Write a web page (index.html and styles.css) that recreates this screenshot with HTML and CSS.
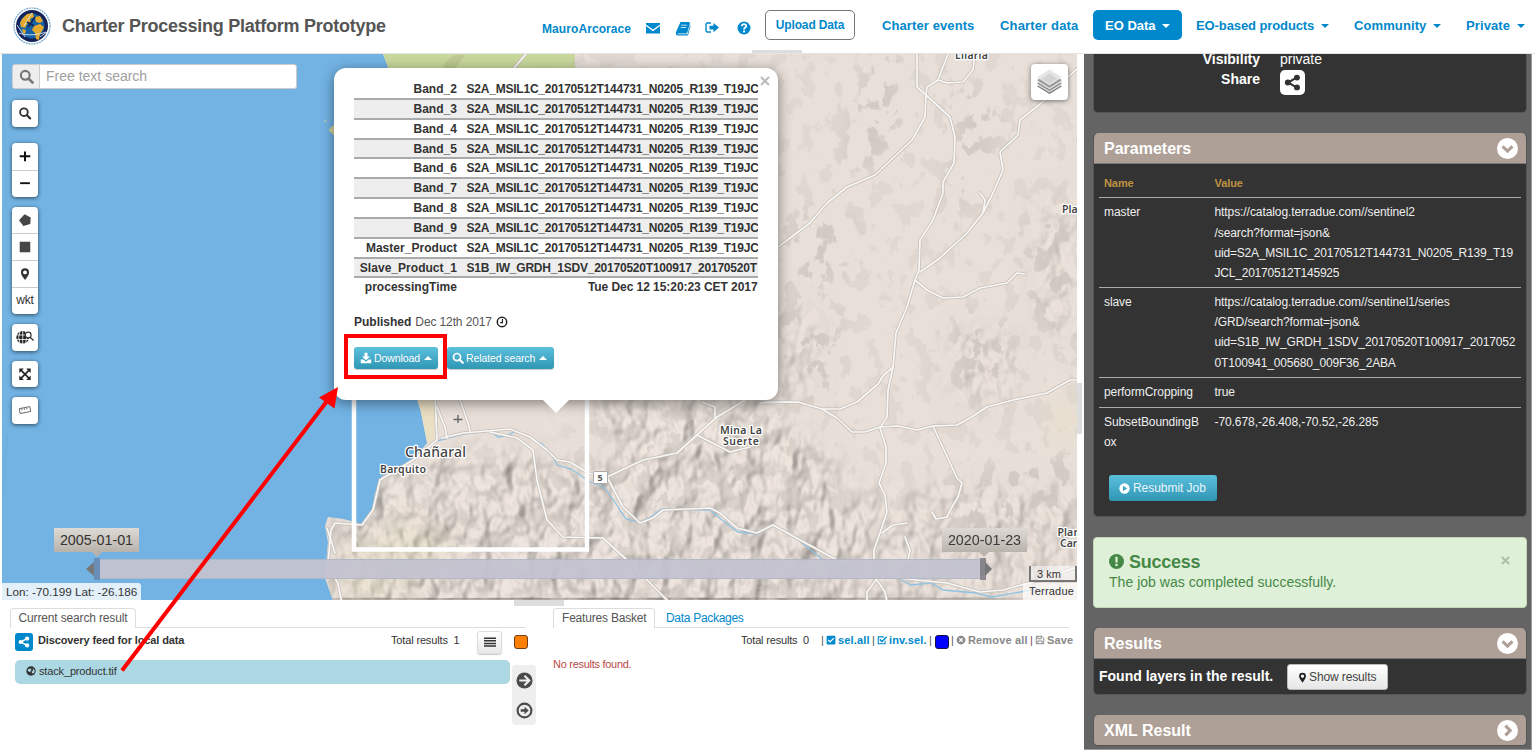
FILE: index.html
```html
<!DOCTYPE html>
<html lang="en">
<head>
<meta charset="utf-8">
<title>Charter Processing Platform Prototype</title>
<link rel="stylesheet" href="styles.css">
</head>
<body>
<svg class="sprite" aria-hidden="true">
  <symbol id="i-search" viewBox="0 0 16 16"><circle cx="6.7" cy="6.7" r="4.7" fill="none" stroke="currentColor" stroke-width="2.3"/><path d="M10.2 10.2L14.4 14.4" stroke="currentColor" stroke-width="2.8" stroke-linecap="round"/></symbol>
  <symbol id="i-share" viewBox="0 0 16 16"><path d="M12 3.2L4 8l8 4.8" fill="none" stroke="currentColor" stroke-width="2"/><circle cx="12.2" cy="3.4" r="2.8" fill="currentColor"/><circle cx="3.6" cy="8" r="2.8" fill="currentColor"/><circle cx="12.2" cy="12.6" r="2.8" fill="currentColor"/></symbol>
  <symbol id="i-pin" viewBox="0 0 16 16"><path fill="currentColor" fill-rule="evenodd" d="M8 1a5 5 0 0 1 5 5c0 2.200-1.400 4-2.500 6L8 15.500 5.500 12C4.400 10 3 8.200 3 6a5 5 0 0 1 5-5zm0 2.600a2.400 2.400 0 1 0 0 4.800 2.400 2.400 0 0 0 0-4.800z"/></symbol>
</svg>

<header class="header">
  <svg class="logo" viewBox="0 0 38 38">
    <circle cx="19" cy="19" r="18" fill="#fff" stroke="#6fa6cf" stroke-width="1.200" stroke-dasharray="2 .7"/>
    <circle cx="19" cy="19" r="16" fill="#14235a"/>
    <circle cx="19" cy="19" r="12.500" fill="#1461a5"/>
    <path d="M9 12l5-5 6-1 1 4-4 2 1 3-4 2-2 4-4-1-1-4z M22 10l5-1 3 5-3 2-4-1z M21 19l6-2 4 3-2 4-2 3-1 6-3-1-1-6-3-3z M9 22l4 1-1 4-2-1z" fill="#e5aa2c"/>
    <path d="M6 26c7 3 19 2 27-1M4 18l8 12M11 19l8-13M27 30l7-5" stroke="#d6e8f4" fill="none" stroke-width=".9"/>
    <path d="M15 20l7-10M14 15l7 4" stroke="#102450" stroke-width="1.500"/>
  </svg>
  <h1 class="title">Charter Processing Platform Prototype</h1>
  <div class="user">
    <span class="user-name">MauroArcorace</span>
    <svg viewBox="0 0 16 16"><path fill="currentColor" d="M1 3h14v1.400L8 9.600 1 4.400zM1 6l7 5.200L15 6v7.500H1z"/></svg>
    <svg viewBox="0 0 16 16"><path fill="currentColor" fill-rule="evenodd" d="M5.500 2H14l1 1-2.700 9.500-1 .9H3c-.6 0-.8.9 0 .9h9.500L15 5l.6.6-2.400 9.200-.9.700H3C1 15.500.400 13.700 1 12zM6.400 4.700l-.2.8h5.500l.2-.8zm-.6 2.200l-.2.800h5.500l.2-.8z"/></svg>
    <svg viewBox="0 0 16 16"><path fill="none" stroke="currentColor" stroke-width="1.400" d="M7 3H3.500Q2 3 2 4.500v6Q2 12 3.500 12H7"/><path fill="currentColor" d="M5.500 5.800h4V3L15 7.600l-5.500 4.600V9.400h-4z"/></svg>
    <svg viewBox="0 0 16 16"><circle cx="8" cy="8" r="6.500" fill="currentColor"/><path d="M5.800 6.200Q6 4.200 8 4.200T10.200 6C10.200 7.600 8 7.600 8 9.400M8 10.600v1.800" fill="none" stroke="#fff" stroke-width="1.800"/></svg>
  </div>
  <nav class="nav">
    <a class="upload">Upload Data</a>
    <a class="n-events">Charter events</a>
    <a class="n-data">Charter data</a>
    <a class="active">EO Data<i class="caret"></i></a>
    <a class="n-prod">EO-based products<i class="caret"></i></a>
    <a class="n-comm">Community<i class="caret"></i></a>
    <a class="n-priv">Private<i class="caret"></i></a>
  </nav>
  <i class="grip grip-top"></i>
</header>

<main class="main">
  <div class="left">
    <section class="map">
      <svg class="map-canvas" viewBox="2 54 1075 546">
        <defs>
          <filter id="relief" x="0" y="0" width="1" height="1" color-interpolation-filters="sRGB">
            <feTurbulence type="fractalNoise" baseFrequency=".045 .03" numOctaves="3" seed="8"/>
            <feColorMatrix values="0 0 0 0 0  0 0 0 0 0  0 0 0 0 0  1 0 0 0 0"/>
            <feGaussianBlur stdDeviation=".8"/>
            <feDiffuseLighting surfaceScale="11" lighting-color="#e8dfd8" diffuseConstant="1.060"><feDistantLight azimuth="220" elevation="68"/></feDiffuseLighting>
          </filter>
          <filter id="spots" x="0" y="0" width="1" height="1" color-interpolation-filters="sRGB">
            <feTurbulence type="fractalNoise" baseFrequency=".06 .045" numOctaves="4" seed="21"/>
            <feColorMatrix values="0 0 0 0 .81  0 0 0 0 .78  0 0 0 0 .75  16 0 0 0 -8.900"/>
          </filter>
          <filter id="soft" x="-.3" y="-.3" width="1.600" height="1.600"><feGaussianBlur stdDeviation="12"/></filter>
          <mask id="rugged"><g fill="#fff" filter="url(#soft)">
            <path d="M340 490L480 450l110 20 180-60 60 50 40 100-30 50H330z"/>
            <path d="M590 400h190l-30 70-110 20z"/>
            <path opacity=".7" d="M830 490h250v60l-80 60H830z"/>
            <path opacity=".6" d="M780 290l40 30-10 75-30 5zM960 330l60 10-10 70-60-15zM1040 200l40-10v160l-40-30z"/>
          </g></mask>
          <mask id="speckle"><g fill="#fff" filter="url(#soft)">
            <path opacity=".35" d="M560 40h540v580H560z"/>
            <path opacity=".5" d="M340 490L480 440l110 20v150H340z"/>
            <path opacity=".5" d="M590 400h190l50 60 40 140H590z"/>
            <path d="M870 60l30-6v100l-60 20zM960 80l40 30-20 90-30 10zM960 310l50 20v60l-60 5zM1030 210l50 10v130l-50-30zM940 480l140-30v60l-110 70z"/>
            <path d="M790 210l70 10-20 60-50 10zM780 300l60 10-10 90h-50z"/>
          </g></mask>
          <clipPath id="landclip"><path d="M383 54l7 18 25 320 6 20 6 31-4 5-11 14-30 14-7 17-2 18-11 13-19-5-15-2-3 9 3 16-3 36 8 23h744V54z"/></clipPath>
        </defs>
        <rect x="2" y="54" width="1075" height="546" fill="#72b3e4"/>
        <g clip-path="url(#landclip)">
          <rect x="320" y="54" width="760" height="546" fill="#e8dfd8"/>
          <path d="M383 54h192v20H383z" fill="#c8d89c"/>
          <g mask="url(#rugged)"><rect x="320" y="54" width="760" height="546" filter="url(#relief)" opacity=".5"/></g>
          <g mask="url(#speckle)"><rect x="320" y="54" width="760" height="546" filter="url(#spots)" opacity=".9"/></g>
          <path d="M455 55q-10 5-12 13h12q8-9 10-13z" fill="#b4c088" opacity=".6"/>
          <path d="M415 395h20l-1 45-7 3-5-22z" fill="#e9dfc3"/>
          <path d="M340 560l60-40 55 20-20 35-70 25h-20z" fill="#e4dfb4" opacity=".3" filter="url(#soft)"/>
          <path d="M1050 410l28-15v40l-25 5z" fill="#e9dfb8" opacity=".4" filter="url(#soft)"/>
        </g>
        <path d="M324 120l3 2M329 130l5-5v10z" fill="#cfd19a" stroke="#cfd19a"/>
        <path d="M2 70q5 100 4 140M8 435q-4 20-4 60M33 315q1 50-12 75" fill="none" stroke="#69a9d8" stroke-width=".8"/>
        <g id="rivers" fill="none" stroke="#8fc3e3" stroke-width="1.300">
          <path d="M437 441l26-7 27-3 8 6 8-1 10-5 26 13 9 9 6 12 14 4 19 13 14 5 12 17 10 15 13 3 10-4 13-9 48 1 12 10 16 12 20 2 16-9 27 17 22 18 32 12M897 578l14 7 20-2 12 7 33 3 16 4 45-8M1062 573l15-5"/>
        </g>
        <g id="roads" fill="none" stroke-linejoin="round" stroke-linecap="round">
          <g class="road-case"><use href="#roadlines"/></g>
          <g class="road-core"><g id="roadlines">
            <path d="M917 54v33l9 8 24 22 5 20-1 26-11 19v11l-10 27-13 20-1 30-4 10-8 27-11 26-3 34-5 23-1 27-7 11 6 19v16l-7 20 6 12 2 17-6 18-7 20v10l2 20-9 12v10M877 580l8 12 2 10"/>
            <path d="M948 54l-10 26-11 7-1 8-1 22-13 23-37 35-28 12-20 16-17 20-32 24M975 54l-2 16-10 12-16 1-9-3"/>
            <path d="M1078 68l-10 9-23 23-25 20-2 15-18 17 3 18-10 23-10 20-16 20-27 25-20 14M980 193l5 7-2 13M915 280l12 10 16 8 20-1 17-9 27-5 10-10 8 1"/>
            <path d="M760 403l38-1 24 7h18l17-7 21-18 5-8 10-9M822 409l15 9 15 14h13l15-5 18-1 19 4 16-4 24-1 13-7 17-11 26-7 34-7 23-13h7"/>
            <path d="M933 426l24 52 5 5-4 14-6 10-5 10-11 2-4-7M882 533l11-8 14-2M905 537l5 13-2 10"/>
            <path d="M435 395l2 45-24 20-33 20-7 30-11 15-27-2-4 7-2 22-1 10 10 22 4 20M442 438l21-5 47-4 20 8 17 13 10 10 13 2 18 11 19 4 16 30 17 16 13-5 10-8 47-2 10 5 17 15 20 5 16-8 27 15 37 20 60 18 50 5 33 9 23-2 37-10 37-13"/>
            <path d="M607 477l36-17 34-7 20-18 20-18 30-18M697 435l33 17 20-5M702 402l13 5v10M490 432l27 6 16 12 4 30 10 40 16 17 40 1 24 22 18 18 22 22M437 407l8 20 2 11M460 400l8 23 2 8M765 402h25M514 68l12-14M327 528l8 25"/>
          </g></g>
        </g>
        <g id="labels" class="map-labels">
          <text class="town" x="405" y="457" textLength="61">Chañaral</text>
          <text x="380" y="473" textLength="46">Barquito</text>
          <text x="720" y="434" textLength="42">Mina La</text>
          <text x="723" y="445" textLength="36">Suerte</text>
          <text x="955" y="58.500" textLength="33">Lliaria</text>
          <text x="1062" y="213">Pla</text>
          <text x="1057.500" y="535.500">Pla</text><text x="1073.500" y="535.500">r</text>
          <text x="1060" y="547">Car</text>
        </g>
        <path d="M453.500 419.500h9M458 415v8" stroke="#666" stroke-width="1.400"/>
        <rect x="593.500" y="471.500" width="14" height="12" rx="1" fill="#fff" stroke="#aaa"/>
        <text class="shield" x="597.500" y="481">5</text>
        <rect x="354" y="300" width="233" height="249.500" fill="none" stroke="#fff" stroke-width="4.500"/>
      </svg>

      <div class="search"><span><svg viewBox="0 0 16 16"><use href="#i-search"/></svg></span><b>Free text search</b></div>

      <div class="tools">
        <div class="tool"><svg viewBox="0 0 16 16"><use href="#i-search"/></svg></div>
        <div class="tool gap-a"><svg viewBox="0 0 16 16"><path d="M8 2v12M1.500 8h13" stroke="#111" stroke-width="2.500"/></svg><svg viewBox="0 0 16 16"><path d="M2 7h12" stroke="#111" stroke-width="2.300"/></svg></div>
        <div class="tool gap-b">
          <svg viewBox="0 0 16 16"><path d="M7.500.500l7.500 4-.5 8L6 15 .500 8z" fill="#464646"/></svg>
          <svg viewBox="0 0 16 16"><path d="M1.500 1.500h13v13h-13z" fill="#464646"/></svg>
          <svg viewBox="0 0 16 16"><use href="#i-pin"/></svg>
          <em>wkt</em>
        </div>
        <div class="tool gap-b"><svg class="wide" viewBox="0 0 20 16"><circle cx="7.500" cy="8" r="7" fill="#222"/><path d="M0 5.500h15M0 10.500h15M7.500 0v16M4.500 1q-3 7 0 14M10.500 1q3 7 0 14" stroke="#fff" fill="none" stroke-width=".9"/><circle cx="13.500" cy="5.500" r="3.200" fill="#fff" stroke="#333" stroke-width="1.300"/><path d="M15.500 8l4 3.500" stroke="#333" stroke-width="1.500"/></svg></div>
        <div class="tool gap-b"><svg viewBox="0 0 16 16"><path d="M3 3l10 10M13 3L3 13" stroke="#222" stroke-width="2"/><path d="M1 1h5.500L1 6.500zM15 1H9.500L15 6.500zM1 15h5.500L1 9.500zM15 15H9.500L15 9.500z" fill="#222"/></svg></div>
        <div class="tool gap-b"><svg viewBox="0 0 16 16"><path d="M1 6l13-2.500 1 6L2 12zM4 6l.4 2M7 5.400l.4 2M10 4.900l.4 2" fill="none" stroke="#555" stroke-width="1.100"/></svg></div>
      </div>

      <div class="layers"><svg viewBox="0 0 28 28"><path d="M1 18.500l13 8 13-8-3-1.500-10 6-10-6z" fill="#777"/><path d="M1 17l13 8 13-8-3-1.500-10 6-10-6z" fill="#ddd"/><path d="M1 15.300l13 8 13-8-3-1.500-10 6-10-6z" fill="#8a8a8a"/><path d="M1 13.800l13 8 13-8-3-1.500-10 6-10-6z" fill="#ddd"/><path d="M1 12l13 8 13-8-3-1.500-10 6-10-6z" fill="#999"/><path d="M14 1l13 8-13 8.500L1 9z" fill="#e6e6e6"/><path d="M14 5l8 5.500-8 5.500-8-5.500z" fill="#d4d4d4"/></svg></div>

      <div class="slider">
        <i class="handle h-left"></i><i class="bar"></i><i class="handle h-right"></i>
        <span class="date d-left">2005-01-01</span><span class="date d-right">2020-01-23</span>
      </div>
      <div class="coords">Lon: -70.199 Lat: -26.186</div>
      <div class="scale">3 km</div>
      <div class="credit">Terradue</div>

      <div class="popup">
        <svg class="close" viewBox="0 0 10 10"><path d="M1 1l8 8M9 1L1 9" stroke="#bbb" stroke-width="2"/></svg>
        <div class="bands">
          <div class="band"><span>Band_2</span><span>S2A_MSIL1C_20170512T144731_N0205_R139_T19JC</span></div>
          <div class="band"><span>Band_3</span><span>S2A_MSIL1C_20170512T144731_N0205_R139_T19JC</span></div>
          <div class="band"><span>Band_4</span><span>S2A_MSIL1C_20170512T144731_N0205_R139_T19JC</span></div>
          <div class="band"><span>Band_5</span><span>S2A_MSIL1C_20170512T144731_N0205_R139_T19JC</span></div>
          <div class="band"><span>Band_6</span><span>S2A_MSIL1C_20170512T144731_N0205_R139_T19JC</span></div>
          <div class="band"><span>Band_7</span><span>S2A_MSIL1C_20170512T144731_N0205_R139_T19JC</span></div>
          <div class="band"><span>Band_8</span><span>S2A_MSIL1C_20170512T144731_N0205_R139_T19JC</span></div>
          <div class="band"><span>Band_9</span><span>S2A_MSIL1C_20170512T144731_N0205_R139_T19JC</span></div>
          <div class="band"><span>Master_Product</span><span>S2A_MSIL1C_20170512T144731_N0205_R139_T19JC</span></div>
          <div class="band"><span>Slave_Product_1</span><span>S1B_IW_GRDH_1SDV_20170520T100917_20170520T</span></div>
          <div class="band last"><span>processingTime</span><span>Tue Dec 12 15:20:23 CET 2017</span></div>
        </div>
        <div class="published"><b>Published</b> Dec 12th 2017 <svg viewBox="0 0 16 16"><circle cx="8" cy="8" r="6.300" fill="none" stroke="currentColor" stroke-width="2"/><path d="M8.600 4v4.800H5.500" fill="none" stroke="currentColor" stroke-width="1.500"/></svg></div>
        <div class="actions">
          <span class="btn-info"><svg viewBox="0 0 16 16"><path fill="#fff" d="M6 1h4v5h3.500L8 11 2.500 6H6zM1 10h3.500L8 13l3.500-3H15v5H1z"/></svg><u>Download</u><i class="caret up"></i></span>
          <span class="btn-info rel"><svg viewBox="0 0 16 16"><use href="#i-search"/></svg><u>Related search</u><i class="caret up"></i></span>
        </div>
      </div>
    </section>

    <section class="bottom">
      <i class="grip grip-mid"></i>
      <div class="results">
        <div class="tabs"><span class="tab w-cur">Current search result</span></div>
        <div class="toolbar">
          <span class="share"><svg viewBox="0 0 16 16"><use href="#i-share"/></svg></span>
          <b class="feed">Discovery feed for local data</b>
          <span class="total">Total results&nbsp; 1</span>
          <span class="list-btn"><svg viewBox="0 0 12 10"><path d="M0 1.200h12M0 3.800h12M0 6.400h12M0 9h12" stroke="#333" stroke-width="1.500"/></svg></span>
          <i class="swatch orange"></i>
        </div>
        <div class="rows">
          <div class="item"><svg viewBox="0 0 16 16"><circle cx="8" cy="8" r="7.500" fill="#333"/><path d="M3 5l4-1 2 2-2 2v2L5 9 3 8zM11 4l3 3-1 4-3 1-1-3 2-1z" fill="#acd8e4"/></svg><span>stack_product.tif</span></div>
          <div class="move">
            <svg viewBox="0 0 18 18"><circle cx="9" cy="9" r="8.500" fill="#4a4a4a"/><path d="M3.500 9h9M9 4l5 5-5 5" fill="none" stroke="#eee" stroke-width="2.300"/></svg>
            <svg viewBox="0 0 18 18"><circle cx="9" cy="9" r="7.300" fill="none" stroke="#4a4a4a" stroke-width="2.200"/><path d="M5 7.600h4V5l4.500 4L9 13v-2.600H5z" fill="#4a4a4a"/></svg>
          </div>
        </div>
      </div>
      <div class="basket">
        <div class="tabs"><span class="tab w-bas">Features Basket</span><span class="tab-link">Data Packages</span></div>
        <div class="basket-tools">
          <span class="t-total">Total results&nbsp; 0</span>
          <span class="bt blue g-sel"><s>|</s><svg viewBox="0 0 16 16"><rect x="1" y="1" width="14" height="14" rx="2" fill="currentColor"/><path d="M3.500 8l3 3 6-6" fill="none" stroke="#fff" stroke-width="2.200"/></svg><b>sel.all</b></span>
          <span class="bt blue g-inv"><s>|</s><svg viewBox="0 0 16 16"><path d="M13 9v5H2V3h9" fill="none" stroke="currentColor" stroke-width="1.700"/><path d="M4.500 7l3.500 3.500L15.500 3" fill="none" stroke="currentColor" stroke-width="2.400"/></svg><b>inv.sel.</b></span>
          <span class="bt g-blue"><s>|</s><i class="swatch bluebox"></i></span>
          <span class="bt grey g-rem"><s>|</s><svg viewBox="0 0 16 16"><circle cx="8" cy="8" r="7" fill="currentColor"/><path d="M5.300 5.300l5.400 5.400M10.700 5.300l-5.400 5.400" stroke="#fff" stroke-width="2"/></svg><b>Remove all</b></span>
          <span class="bt grey g-save"><s>|</s><svg viewBox="0 0 16 16"><path d="M2 2h9l3 3v9H2zM4.500 2v4H10V2M4.500 14V9.500h7V14" fill="none" stroke="currentColor" stroke-width="1.500"/></svg><b>Save</b></span>
        </div>
        <p class="none">No results found.</p>
      </div>
    </section>
  </div>

  <i class="grip grip-side"></i>

  <aside class="panel">
    <div class="card info">
      <dl><dt>Visibility</dt><dd>private</dd><dt>Share</dt><dd><span class="share-lg"><svg viewBox="0 0 16 16"><use href="#i-share"/></svg></span></dd></dl>
    </div>
    <div class="card">
      <h2>Parameters<svg viewBox="0 0 20 20"><circle cx="10" cy="10" r="10" fill="#fff"/><path d="M5.300 8l4.700 4.500L14.700 8" fill="none" stroke="#ae9f97" stroke-width="3"/></svg></h2>
      <div class="params">
        <div class="prow phead"><span>Name</span><span>Value</span></div>
        <div class="prow"><span>master</span><span>https://catalog.terradue.com//sentinel2<br>/search?format=json&amp;<br><u class="uid">uid=S2A_MSIL1C_20170512T144731_N0205_R139_T19<br>JCL_20170512T145925</u></span></div>
        <div class="prow"><span>slave</span><span>https://catalog.terradue.com//sentinel1/series<br>/GRD/search?format=json&amp;<br><u class="uid uid-slave">uid=S1B_IW_GRDH_1SDV_20170520T100917_2017052<br>0T100941_005680_009F36_2ABA</u></span></div>
        <div class="prow"><span>performCropping</span><span>true</span></div>
        <div class="prow"><span>SubsetBoundingB<br>ox</span><span>-70.678,-26.408,-70.52,-26.285</span></div>
        <span class="resubmit"><svg viewBox="0 0 16 16"><circle cx="8" cy="8" r="7.500" fill="#fff"/><path d="M5.800 4l6 4-6 4z" fill="#3fa5c4"/></svg>Resubmit Job</span>
      </div>
    </div>
    <div class="alert">
      <svg class="close-alert" viewBox="0 0 10 10"><path d="M1 1l8 8M9 1L1 9" stroke="#aec0a9" stroke-width="2.400"/></svg>
      <h3><svg viewBox="0 0 16 16"><circle cx="8" cy="8" r="8" fill="currentColor"/><path d="M8 3v6M8 10.500v2.300" stroke="#dff0d8" stroke-width="2.400"/></svg>Success</h3>
      <p>The job was completed successfully.</p>
    </div>
    <div class="card">
      <h2>Results<svg viewBox="0 0 20 20"><circle cx="10" cy="10" r="10" fill="#fff"/><path d="M5.300 8l4.700 4.500L14.700 8" fill="none" stroke="#ae9f97" stroke-width="3"/></svg></h2>
      <div class="found"><b>Found layers in the result.</b><span class="show"><svg viewBox="0 0 16 16"><use href="#i-pin"/></svg>Show results</span></div>
    </div>
    <div class="card">
      <h2 class="closed">XML Result<svg viewBox="0 0 20 20"><circle cx="10" cy="10" r="10" fill="#fff"/><path d="M8 5.300l4.500 4.700L8 14.700" fill="none" stroke="#ae9f97" stroke-width="3"/></svg></h2>
    </div>
  </aside>
</main>

<svg class="annotation" viewBox="0 0 1535 754">
  <rect x="346" y="336" width="99" height="41" fill="none" stroke="red" stroke-width="4"/>
  <path d="M122 670.500L329 398.500" stroke="red" stroke-width="4"/>
  <path d="M338 387l-19 10.500 15.500 11z" fill="red"/>
</svg>
</body>
</html>
```
FILE: styles.css
```css
* { box-sizing: border-box; }
body { margin: 0; width: 1535px; height: 754px; overflow: hidden; background: #fff; color: #333; font: 12px "Liberation Sans", Arial, sans-serif; position: relative; white-space: nowrap; }
i, em, u, s { font-style: normal; text-decoration: none; }
svg { display: block; flex: none; }
.sprite { position: absolute; width: 0; height: 0; }

.header { height: 54px; display: flex; position: relative; padding-left: 13px; border-bottom: 1px solid #e4e4e4; }
.logo { width: 38px; height: 38px; margin-top: 7px; }
.title { margin: 0 0 0 11px; width: 480px; font-size: 18px; line-height: 52px; color: #555; letter-spacing: -.25px; }
.user { display: flex; align-items: center; height: 20px; margin-top: 18px; width: 223px; color: #0088cc; }
.user-name { width: 105px; font-weight: bold; font-size: 12px; letter-spacing: .08px; padding-top: 1px; }
.user svg { width: 16px; height: 16px; margin-right: 13.500px; }
.user svg:last-child { margin-left: 2px; }
.nav { display: flex; padding-top: 10px; color: #0088cc; font-weight: bold; font-size: 13px; }
.nav a { height: 30px; line-height: 31px; letter-spacing: .1px; }
.nav .upload { width: 90px; border: 1px solid #777; border-radius: 5px; text-align: center; line-height: 29px; font-size: 12px; letter-spacing: -.15px; }
.nav .n-events { width: 118px; margin-left: 27px; }
.nav .n-data { width: 93px; letter-spacing: .15px; }
.nav .active { width: 89px; background: #0088cc; color: #fff; border-radius: 5px; padding-left: 12px; margin-right: 14px; letter-spacing: 0; }
.nav .n-prod { width: 158px; letter-spacing: -.1px; }
.nav .n-comm { width: 112px; }
.caret { display: inline-block; border: 4px solid transparent; border-top-color: currentColor; border-bottom: 0; margin-left: 6.500px; vertical-align: 2px; }
.caret.up { border-bottom: 4px solid #fff; border-top: 0; margin-left: 4px; }
.grip { position: absolute; background: #ddd; display: block; }
.grip-top { left: 752px; top: 50px; width: 50px; height: 3px; }
.grip-mid { left: 512px; top: 0; width: 50px; height: 6px; }
.grip-side { left: 1077px; top: 329px; width: 5px; height: 51px; }

.main { display: flex; position: relative; height: 696px; padding-left: 2px; }
.left { width: 1075px; margin-right: 7px; }
.map { position: relative; height: 546px; overflow: hidden; }
.map-canvas { width: 1075px; height: 546px; }
.road-case { stroke: #c5bfb9; stroke-width: 3.200; }
.road-core { stroke: #faf8f6; stroke-width: 1.700; }
.map-labels { font: 600 10.500px "Noto Sans", sans-serif; fill: #444; stroke: #fff; stroke-width: 2.500px; paint-order: stroke; stroke-linejoin: round; }
.map-labels .town { font-size: 14px; font-weight: 500; }
.shield { font: bold 9px "Noto Sans", sans-serif; fill: #555; }

.search { position: absolute; left: 10px; top: 10px; width: 285px; height: 25px; display: flex; background: #fff; border: 1px solid #ccc; border-radius: 3px; overflow: hidden; }
.search span { width: 27px; background: #eee; border-right: 1px solid #ccc; padding: 4px 6px; color: #777; }
.search svg { width: 15px; height: 15px; }
.search b { font-weight: normal; font-size: 14px; line-height: 22px; padding-left: 6px; color: #a0a0a0; }
.tools { position: absolute; left: 10px; top: 46px; width: 26px; }
.tool { background: #fff; border-radius: 4px; box-shadow: 0 1px 4px rgba(0,0,0,.6); display: flex; flex-direction: column; color: #333; }
.tool svg { width: 26px; height: 26.500px; padding: 6.500px; }
.tool svg + svg, .tool em { border-top: 1px solid #ccc; }
.tool svg + svg { height: 27px; }
.tool em { text-align: center; line-height: 25px; height: 27px; font-size: 12px; letter-spacing: -.1px; }
.tool .wide { padding: 6px 3px; }
.gap-a { margin-top: 16.500px; }
.gap-b { margin-top: 10px; }
.layers { position: absolute; left: 1029px; top: 10px; width: 37px; height: 36px; background: #fff; border-radius: 4px; box-shadow: 0 1px 5px rgba(0,0,0,.5); padding: 4px 5px; }
.layers svg { width: 27px; height: 28px; }

.slider { position: absolute; left: 85px; top: 504px; display: flex; }
.bar { width: 880px; height: 20px; margin-top: 1px; background: rgba(194,194,207,.94); border: solid rgba(160,165,190,.4); border-width: 1px 0; }
.handle { width: 6px; height: 22px; margin-left: 7px; background: rgba(100,125,160,.65); position: relative; }
.h-right { margin-left: 0; background: rgba(110,110,120,.75); }
.handle::after { content: ""; position: absolute; top: 4px; left: -8px; border: 7px solid transparent; border-right: 8px solid #777; border-left: 0; }
.h-right::after { left: 5px; border-left: 7px solid #777; border-right: 0; }
.date { position: absolute; top: -30px; width: 85px; height: 24px; line-height: 25px; text-align: center; font-size: 14.300px; background: linear-gradient(#dedad5, #b8b2ab); }
.date::after { content: ""; position: absolute; left: 38px; top: 24px; border: 5px solid transparent; border-top-color: #b8b2ab; }
.d-left { left: -33px; }
.d-right { left: 855px; opacity: .95; }
.d-right::after { left: 37px; }
.coords { position: absolute; left: 0; bottom: 0; width: 139px; height: 17px; line-height: 17px; padding-left: 4px; font-size: 11.700px; background: rgba(255,255,255,.8); border-radius: 0 3px 0 0; }
.scale { position: absolute; right: 0; bottom: 18px; width: 48px; height: 16px; border: 2px solid #777; border-top: 0; background: rgba(255,255,255,.5); line-height: 16px; font-size: 11px; padding-left: 6px; }
.credit { position: absolute; right: 0; bottom: 0; width: 54px; height: 17px; line-height: 17px; font-size: 11px; padding-left: 6px; background: rgba(255,255,255,.7); letter-spacing: .2px; }

.popup { position: absolute; left: 332px; top: 14px; width: 444px; height: 332px; padding: 12px 20px; background: #fff; border-radius: 12px; box-shadow: 0 3px 14px rgba(0,0,0,.45); }
.popup::after { content: ""; position: absolute; left: 208px; top: 331px; border: 14px solid transparent; border-top-color: #fff; border-bottom: 0; }
.close { position: absolute; right: 8px; top: 8px; width: 10px; height: 10px; }
.bands { width: 404px; overflow: hidden; }
.band { display: grid; grid-template-columns: 103px 300px; column-gap: 9.500px; height: 19.850px; line-height: 19px; border-bottom: 2px solid #aaa; font-weight: bold; letter-spacing: .03px; }
.band:nth-child(even) { background: #eee; }
.band span:first-child { text-align: right; }
.band span:last-child { letter-spacing: -.22px; }
.band.last { border: 0; grid-template-columns: 103px 291px; }
.band.last span:last-child { text-align: right; letter-spacing: -.06px; }
.published { display: flex; align-items: center; gap: 4px; margin-top: 15px; height: 17px; color: #555; letter-spacing: -.12px; }
.published b { color: #333; letter-spacing: 0; }
.published svg { width: 12px; height: 12px; color: #222; }
.actions { display: flex; margin-top: 17px; }
.btn-info { display: flex; align-items: center; width: 84px; height: 22px; padding-left: 6px; border-radius: 3px; color: #fff; font-size: 10.500px; letter-spacing: -.1px; background: linear-gradient(#5bc0de, #2f96b4); box-shadow: 0 1px 1px rgba(0,0,0,.2); }
.btn-info.rel { width: 107px; margin-left: 9px; padding-left: 5px; }
.btn-info svg { width: 12px; height: 12px; margin-right: 2px; }

.bottom { position: relative; display: flex; height: 150px; }
.results { width: 534px; padding: 8px 0 0 8px; }
.tabs { display: flex; height: 20px; width: 516px; border-bottom: 1px solid #ddd; }
.tab { height: 20px; line-height: 19px; padding-left: 8px; border: 1px solid #ddd; border-bottom: 0; border-radius: 4px 4px 0 0; background: #fff; color: #555; }
.w-cur { width: 126px; padding-left: 7.500px; letter-spacing: -.15px; }
.w-bas { width: 102px; letter-spacing: -.2px; }
.tab-link { color: #0088cc; line-height: 20px; margin-left: 11px; letter-spacing: -.3px; }
.toolbar { display: flex; height: 32px; padding-left: 5px; }
.share { width: 18px; height: 18px; margin-top: 5px; padding: 3px; background: #0088cc; border-radius: 3px; color: #fff; }
.share svg { width: 12px; height: 12px; }
.feed { width: 358px; padding-left: 5px; line-height: 25px; font-size: 11px; letter-spacing: -.12px; }
.total { width: 86px; line-height: 25px; font-size: 11px; letter-spacing: -.15px; }
.list-btn { width: 25px; height: 23px; margin-top: 3px; padding: 5px 6px; border: 1px solid #ddd; border-radius: 3px; background: linear-gradient(#fff, #e8e8e8); box-shadow: 0 1px 1px #ccc; }
.list-btn svg { width: 12px; height: 10px; }
.swatch { width: 14px; height: 14px; display: block; border: 1px solid #733c12; border-radius: 3px; }
.orange { background: #ff7f00; margin: 7px 0 0 12px; }
.rows { display: flex; padding-left: 5px; }
.item { width: 495px; height: 24px; display: flex; padding-left: 10px; background: #acd8e4; border-radius: 5px; font-size: 11px; line-height: 22px; letter-spacing: -.15px; }
.item svg { width: 10px; height: 10px; margin: 6px 3px 0 1px; }
.move { margin: 5px 0 0 2px; width: 24px; height: 60px; border-radius: 4px; background: #eee; padding: 6.500px 3.500px; display: flex; flex-direction: column; gap: 13.500px; }
.move svg { width: 17px; height: 17px; }
.basket { margin-left: 17px; width: 522px; padding-top: 8px; }
.basket-tools { display: flex; height: 25px; padding-left: 188px; font-size: 11px; line-height: 24px; }
.t-total { width: 80px; letter-spacing: -.18px; }
.bt { display: flex; }
.bt s { width: 5px; color: #555; }
.bt svg { width: 10px; height: 10px; margin: 7px 2px 0 0; }
.bt b { letter-spacing: .15px; }
.blue { color: #0088cc; } .grey { color: #888; }
.g-sel { width: 51px; } .g-inv { width: 57px; } .g-blue { width: 22px; } .g-rem { width: 79px; }
.g-save s { color: #746; }
.bluebox { background: #00f; border-color: #114; margin: 7px 0 0 1px; }
.none { margin: 3px 0; line-height: 16px; font-size: 11px; color: #b94a48; letter-spacing: -.28px; }

.panel { width: 448px; height: 696px; padding: 0 4px 0 9px; background: #646464; border: solid #999; border-width: 0 1px 1px 0; overflow: hidden; }
.card { background: #333; border-radius: 5px; margin-bottom: 20px; width: 434px; overflow: hidden; border: 1px solid #555; border-top: 0; }
.info { height: 59px; border-radius: 0 0 5px 5px; }
.info dl { display: grid; grid-template-columns: 166px 1fr; column-gap: 20px; margin: -5px 0 0; line-height: 20px; font-size: 14px; color: #fff; }
.info dt { text-align: right; font-weight: bold; } .info dd { margin: 0; }
.share-lg { display: block; width: 25px; height: 25px; margin-top: 1px; padding: 4px; background: #fff; border-radius: 5px; color: #333; }
.share-lg svg { width: 17px; height: 17px; }
.card h2 { display: flex; justify-content: space-between; align-items: center; height: 31px; margin: 0; padding: 1px 8px 0 10px; background: #ae9f97; border-bottom: 1px solid #777; color: #fff; font-size: 16px; letter-spacing: 0; }
.card h2.closed { height: 30px; border: 0; }
.card h2 svg { width: 21px; height: 21px; }
.params { height: 352px; padding: 5px 5px 0 5px; color: #eee; line-height: 20.100px; letter-spacing: -.08px; }
.uid { letter-spacing: -.21px; }
.uid-slave { letter-spacing: -.16px; }
.prow { display: grid; grid-template-columns: 110.500px 1fr; padding: 4px 5px 4.400px; border-bottom: 1px solid #aaa; }
.prow:nth-child(5) { border: 0; }
.phead { color: #bf9243; font-weight: bold; font-size: 11px; }
.resubmit { display: flex; align-items: center; width: 108px; height: 26px; margin: 19px 0 0 10px; padding-left: 10px; border-radius: 3px; background: linear-gradient(#5bc0de, #2f96b4); color: #e8f6fa; letter-spacing: -.05px; }
.resubmit svg { width: 11px; height: 11px; margin-right: 3px; }
.alert { position: relative; width: 434px; height: 71px; margin-bottom: 20px; padding: 13px 15px; background: #dff0d8; border: 1px solid #c3d9b5; border-radius: 4px; color: #468847; }
.close-alert { position: absolute; right: 16px; top: 18px; width: 9px; height: 9px; }
.alert h3 { display: flex; gap: 5px; margin: 0; font-size: 18px; line-height: 22px; height: 21px; letter-spacing: -.25px; }
.alert h3 svg { width: 15px; height: 15px; margin-top: 3px; }
.alert p { margin: 0; line-height: 20px; font-size: 14px; letter-spacing: .03px; }
.found { display: flex; height: 35px; padding: 6px 0 0 5px; color: #fff; font-size: 14px; line-height: 22px; }
.found b { width: 188px; }
.show { display: flex; align-items: center; width: 101px; height: 26px; padding-left: 9px; border: 1px solid #bbb; border-radius: 3px; background: linear-gradient(#fff, #e6e6e6); color: #444; font-size: 12px; letter-spacing: -.12px; margin-top: -1px; }
.show svg { width: 11px; height: 11px; margin-right: 1px; color: #222; }
.annotation { position: absolute; left: 0; top: 0; width: 1535px; height: 754px; pointer-events: none; }
```
